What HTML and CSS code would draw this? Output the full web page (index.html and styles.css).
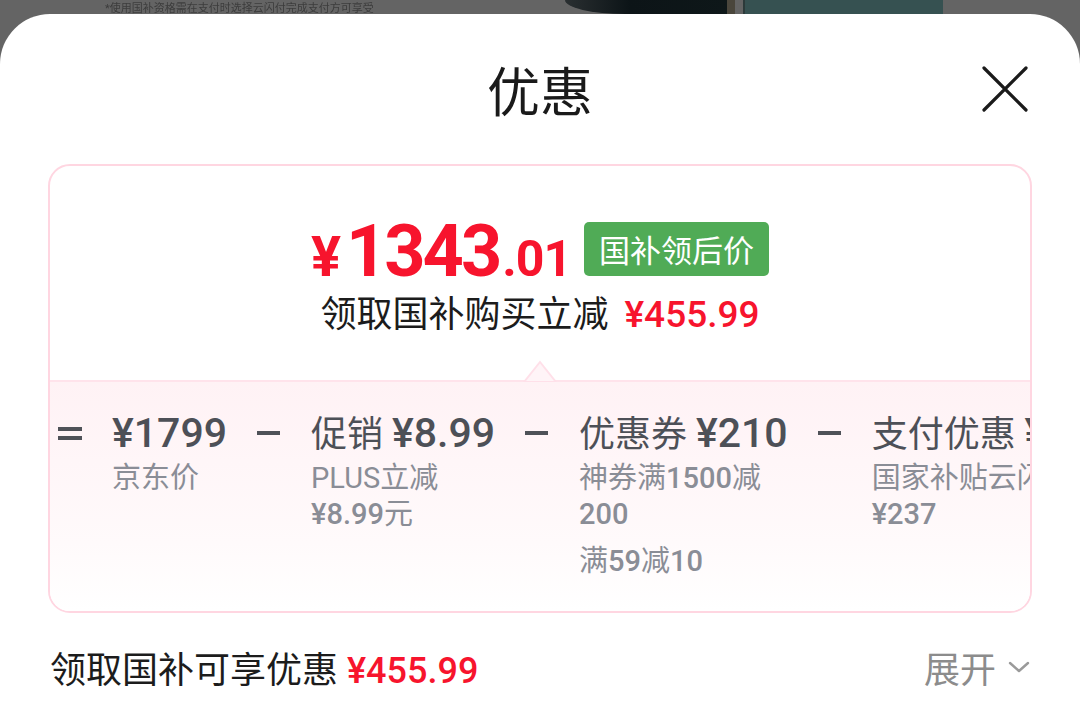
FILE: index.html
```html
<!DOCTYPE html>
<html lang="zh-CN">
<head>
<meta charset="UTF-8">
<meta name="viewport" content="width=device-width, initial-scale=1.0">
<title>优惠</title>
<link rel="stylesheet" href="styles.css">
</head>

<body>
  <div class="backdrop">
    <span class="backdrop-text">*使用国补资格需在支付时选择云闪付完成支付方可享受</span>
    <div class="backdrop-phone"></div>
    <div class="backdrop-box"></div>
  </div>

  <div class="sheet">
    <div class="sheet-header">
      <span></span>
      <h1 class="sheet-title">优惠</h1>
      <button class="close-btn" aria-label="关闭">
        <svg width="46" height="46" viewBox="0 0 46 46">
          <path d="M2 2 L44 44 M44 2 L2 44" stroke="#1a1a1a" stroke-width="3.2" stroke-linecap="round" fill="none"/>
        </svg>
      </button>
    </div>

    <div class="card">
      <div class="card-top">
        <div class="price-row">
          <div class="price">
            <span class="price-yen">¥</span><span class="price-int">1343</span><span class="price-dec">.01</span>
          </div>
          <span class="badge">国补领后价</span>
        </div>
        <div class="saving">领取国补购买立减<span class="red num">¥455.99</span></div>
      </div>

      <div class="card-bottom">
        <svg class="notch" width="34" height="22" viewBox="0 0 34 22">
          <polygon points="1,22 17,2 33,22" fill="#fff4f7" stroke="#ffe0e9" stroke-width="2"/>
        </svg>
        <div class="formula">
          <span class="op op-eq" aria-label="="></span>
          <div class="term">
            <div class="term-main"><span class="num">¥1799</span></div>
            <div class="term-sub">京东价</div>
          </div>
          <span class="op op-minus" aria-label="−"></span>
          <div class="term">
            <div class="term-main">促销 <span class="num">¥8.99</span></div>
            <div class="term-sub">PLUS立减</div>
            <div class="term-sub"><span class="sub-num">¥8.99</span>元</div>
          </div>
          <span class="op op-minus" aria-label="−"></span>
          <div class="term">
            <div class="term-main">优惠券 <span class="num">¥210</span></div>
            <div class="term-sub">神券满<span class="sub-num">1500</span>减</div>
            <div class="term-sub"><span class="sub-num">200</span></div>
            <div class="term-sub term-extra">满<span class="sub-num">59</span>减<span class="sub-num">10</span></div>
          </div>
          <span class="op op-minus" aria-label="−"></span>
          <div class="term">
            <div class="term-main">支付优惠 <span class="num">¥237</span></div>
            <div class="term-sub">国家补贴云闪付</div>
            <div class="term-sub"><span class="sub-num">¥237</span></div>
          </div>
        </div>
      </div>
    </div>

    <div class="summary">
      <div class="summary-left">领取国补可享优惠 <span class="red num">¥455.99</span></div>
      <div class="summary-right">
        展开
        <svg width="22" height="14" viewBox="0 0 22 14">
          <path d="M2 3 L11 11 L20 3" stroke="#9a9a9a" stroke-width="2.4" fill="none" stroke-linecap="round" stroke-linejoin="round"/>
        </svg>
      </div>
    </div>
  </div>
</body>
</html>
```

FILE: styles.css
```css
* {
  box-sizing: border-box;
  margin: 0;
  padding: 0;
}

body {
  font-family: Roboto, "Noto Sans CJK SC", sans-serif;
  background-color: #646464;
  height: 702px;
  overflow: hidden;
}

.backdrop {
  height: 14px;
  display: flex;
  align-items: flex-start;
  overflow: hidden;
}

.backdrop-text {
  margin-left: 105px;
  width: 440px;
  font-size: 11px;
  line-height: 22px;
  margin-top: -2px;
  color: #3c3c3c;
  filter: blur(0.6px);
  white-space: nowrap;
}

.backdrop-phone {
  width: 170px;
  height: 14px;
  margin-left: 20px;
  background: linear-gradient(90deg, #2a2f31, #0c1417 40%, #0e1719);
  border-bottom-left-radius: 60px 14px;
  border-right: 8px solid #4a463c;
}

.backdrop-box {
  width: 200px;
  height: 14px;
  margin-left: 8px;
  background-color: #365151;
  border-left: 2px solid #2c3a3a;
}

.sheet {
  background-color: #fff;
  border-radius: 50px 50px 0 0;
  height: 688px;
}

.sheet-header {
  display: grid;
  grid-template-columns: 1fr auto 1fr;
  align-items: center;
  height: 150px;
  padding: 0 52px;
}

.sheet-title {
  font-family: "Noto Sans CJK SC", sans-serif;
  font-size: 53px;
  font-weight: 400;
  color: #1a1a1a;
  line-height: 60px;
}

.close-btn {
  justify-self: end;
  background: none;
  border: none;
  width: 46px;
  height: 46px;
  display: flex;
}

.card {
  margin: 0 48px;
  border: 2px solid #ffd6e1;
  border-radius: 22px;
  overflow: hidden;
}

.card-top {
  height: 214px;
  padding-top: 48px;
  display: flex;
  flex-direction: column;
  align-items: center;
}

.price-row {
  display: flex;
  align-items: center;
  gap: 13px;
  height: 74px;
}

.price {
  color: #f7142d;
  font-family: Roboto, sans-serif;
  font-weight: 700;
  line-height: 74px;
  white-space: nowrap;
  padding-top: 20px;
}

.price-yen {
  font-size: 56px;
  margin-right: 5px;
}

.price-int {
  font-size: 72px;
  letter-spacing: -3px;
}

.price-dec {
  font-size: 50px;
  letter-spacing: -1px;
  margin-left: 3px;
}

.badge {
  background-color: #50ab56;
  color: #fff;
  font-family: "Noto Sans CJK SC", sans-serif;
  font-size: 31px;
  height: 54px;
  line-height: 54px;
  padding: 0 15px;
  border-radius: 5px;
  margin-top: -4px;
}

.saving {
  margin-top: 7px;
  font-size: 36px;
  line-height: 40px;
  color: #1c1c1c;
}

.saving .num {
  font-size: 37px;
  margin-left: 16px;
}

.red {
  color: #f7142d;
}

.num {
  font-family: Roboto, sans-serif;
  font-weight: 500;
}

.card-bottom {
  position: relative;
  height: 231px;
  border-top: 2px solid #ffe3eb;
  background: linear-gradient(#fff2f5, #fffafb 70%, #fff);
}

.notch {
  position: absolute;
  left: 473px;
  top: -22px;
}

.formula {
  display: flex;
  align-items: flex-start;
  gap: 30px;
  padding: 29px 0 0 8px;
  white-space: nowrap;
}

.op {
  display: block;
  width: 24px;
  height: 44px;
  flex-shrink: 0;
}

.op-eq {
  background:
    linear-gradient(#4f5258, #4f5258) 0 16px / 24px 4px no-repeat,
    linear-gradient(#4f5258, #4f5258) 0 25px / 24px 4px no-repeat;
}

.op-minus {
  background: linear-gradient(#4f5258, #4f5258) 0 20px / 23px 4px no-repeat;
}

.term {
  flex-shrink: 0;
  width: min-content;
}

.term-main {
  font-size: 36px;
  line-height: 44px;
  color: #4d5057;
  white-space: nowrap;
}

.term-main .num {
  font-size: 41px;
}

.term-sub {
  font-size: 29px;
  line-height: 36px;
  color: #8a8d96;
  white-space: nowrap;
}

.term-main + .term-sub {
  margin-top: 3px;
}

.sub-num {
  font-weight: 500;
}

.term-extra {
  margin-top: 11px;
}

.summary {
  display: flex;
  justify-content: space-between;
  align-items: center;
  margin-top: 32px;
  padding: 0 50px;
  height: 44px;
}

.summary-left {
  font-size: 36px;
  color: #1c1c1c;
}

.summary-left .num {
  font-size: 36px;
}

.summary-right {
  display: flex;
  align-items: center;
  gap: 12px;
  font-size: 36px;
  color: #8c8c8c;
}
```
